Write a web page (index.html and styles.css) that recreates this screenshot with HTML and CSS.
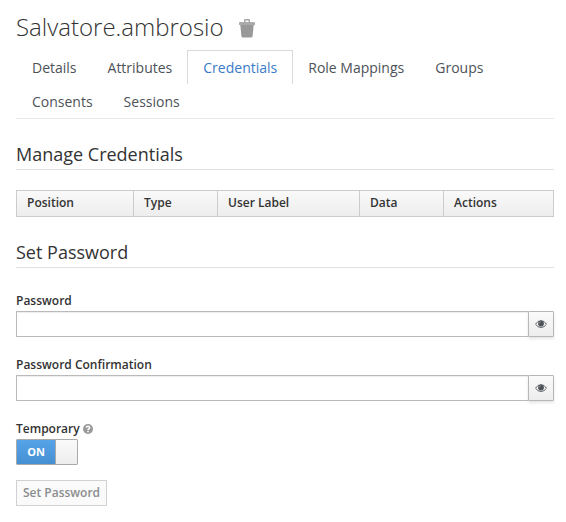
FILE: index.html
```html
<!DOCTYPE html>
<html lang="en">
<head>
<meta charset="utf-8">
<title>Credentials</title>
<link rel="stylesheet" href="styles.css">
</head>
<body>
<main>
  <h1>Salvatore.ambrosio
    <svg class="trash" viewBox="0 0 16 19" aria-hidden="true"><path fill="#aaa" d="M5 3V.8Q5 0 5.800 0h4.400q.8 0 .8.8V3h4q1 0 1 1v2H0V4q0-1 1-1zM6.500 1.500V3h3V1.500z"/><path fill="#999" d="M1.300 6h13.400L13.600 17q-.2 1.500-1.500 1.500H3.900Q2.600 18.500 2.400 17z"/></svg>
  </h1>
  <ul class="tabs">
    <li>Details</li><li>Attributes</li><li class="active">Credentials</li><li>Role Mappings</li><li>Groups</li><li>Consents</li><li>Sessions</li>
  </ul>
  <h2>Manage Credentials</h2>
  <table>
    <thead><tr><th class="c1">Position</th><th class="c2">Type</th><th class="c3">User Label</th><th class="c4">Data</th><th class="c5">Actions</th></tr></thead>
  </table>
  <h2>Set Password</h2>
  <form>
    <div class="group">
      <label for="pw">Password</label>
      <div class="field"><input id="pw" type="password"><span class="eye"><svg viewBox="0 0 12 8"><path fill="none" stroke="#4d5258" stroke-width=".9" d="M.5 4.200Q2.800.6 6 .6t5.500 3.600Q9.200 7.500 6 7.500T.5 4.200z"/><circle cx="6" cy="3.600" r="2.900" fill="#4d5258"/><path fill="none" stroke="#bbb" stroke-width=".6" d="M4.300 3.400Q4.500 2.100 5.800 1.900"/></svg></span></div>
    </div>
    <div class="group">
      <label for="pw2">Password Confirmation</label>
      <div class="field"><input id="pw2" type="password"><span class="eye"><svg viewBox="0 0 12 8"><path fill="none" stroke="#4d5258" stroke-width=".9" d="M.5 4.200Q2.800.6 6 .6t5.500 3.600Q9.200 7.500 6 7.500T.5 4.200z"/><circle cx="6" cy="3.600" r="2.900" fill="#4d5258"/><path fill="none" stroke="#bbb" stroke-width=".6" d="M4.300 3.400Q4.500 2.100 5.800 1.900"/></svg></span></div>
    </div>
    <div class="group last">
      <div class="caption">Temporary <svg class="help" viewBox="0 0 10 10"><circle cx="5" cy="5" r="5" fill="#999"/><path fill="none" stroke="#fff" stroke-width="1.500" d="M3.200 3.700Q3.500 2.300 5 2.300t1.700 1.400Q6.700 4.500 5.700 5 5 5.400 5 6.200"/><path fill="#fff" d="M4.200 6.900h1.600v1.400H4.200z"/></svg></div>
      <div class="switch"><span class="on">ON</span><span class="knob"></span></div>
    </div>
    <button type="button" disabled>Set Password</button>
  </form>
</main>
</body>
</html>
```
FILE: styles.css
```css
* { box-sizing: border-box; }
body {
  margin: 0;
  background: #fff;
  color: #333;
  font: 12px/20px "Open Sans", sans-serif;
}
main { padding: 14px 12px 0 16px; }
h1 {
  display: flex;
  align-items: center;
  gap: 16px;
  height: 26px;
  margin: 0 0 10px;
  font-size: 24px;
  line-height: 26px;
  font-weight: 300;
}
.trash { width: 16px; height: 19px; margin: 3px 0 0 -1px; }
.tabs {
  display: flex;
  flex-wrap: wrap;
  margin: 0;
  padding: 0;
  list-style: none;
  border-bottom: 1px solid #e9e9e9;
}
.tabs li {
  height: 34px;
  margin-right: -1px;
  padding: 7px 15px;
  border: 1px solid transparent;
  border-bottom: 0;
  color: #4d5258;
  font-size: 14px;
}
.tabs .active { border-color: #d9d9d9; color: #3a7bca; }
h2 {
  height: 28px;
  margin: 23px 0 20px;
  border-bottom: 1px solid #e1e1e1;
  font-size: 18px;
  line-height: 25px;
  font-weight: 400;
}
table {
  width: 538px;
  border-collapse: collapse;
  table-layout: fixed;
  background: linear-gradient(#fafafa, #ededed);
}
th {
  height: 26px;
  padding: 0 10px 2px;
  border: 1px solid #ccc;
  text-align: left;
  font-weight: 600;
}
.c1 { width: 117px; }
.c2 { width: 84px; }
.c3 { width: 142px; }
.c4 { width: 84px; }
.c5 { width: 110px; }
.group { height: 64px; }
label, .caption { display: block; height: 20px; line-height: 22px; font-weight: 600; }
form { margin-top: 22px; }
.field { display: flex; height: 26px; margin-top: 1px; }
.field input {
  flex: 1;
  min-width: 0;
  border: 1px solid #bababa;
  border-right: 0;
  border-radius: 1px 0 0 1px;
  background: #fff;
  box-shadow: inset 0 1px 1px rgba(0, 0, 0, .075);
}
.eye {
  display: flex;
  align-items: center;
  justify-content: center;
  width: 26px;
  border: 1px solid #b7b7b7;
  border-radius: 0 1px 1px 0;
  background: linear-gradient(#fafafa, #ededed);
  box-shadow: 0 2px 3px rgba(0, 0, 0, .1);
}
.eye svg { width: 12px; height: 8px; }
.caption { display: flex; align-items: center; gap: 3px; padding-top: 2px; line-height: 20px; }
.help { width: 10px; height: 10px; }
.switch {
  display: flex;
  width: 62px;
  height: 26px;
  margin-top: 1px;
  border: 1px solid #aaa;
  border-radius: 1px;
}
.on {
  width: 38px;
  background: linear-gradient(#57a3e8, #4590d3);
  color: #fff;
  font-size: 11px;
  line-height: 24px;
  font-weight: 700;
  text-align: center;
}
.knob {
  flex: 1;
  border-left: 1px solid #aaa;
  background: linear-gradient(#fafafa, #ededed);
}
.last { height: 62px; }
button {
  display: block;
  width: 91px;
  height: 26px;
  padding: 0;
  border: 1px solid #d1d1d1;
  border-radius: 0;
  background: #fafafa;
  color: #8b8d8f;
  font: 600 12px/22px "Open Sans", sans-serif;
}
```
